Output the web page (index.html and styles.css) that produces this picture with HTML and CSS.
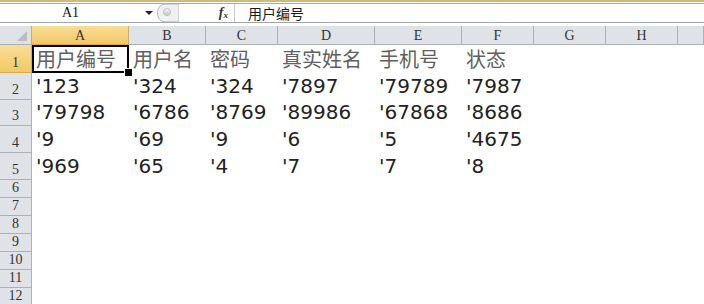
FILE: index.html
```html
<!DOCTYPE html>
<html>
<head>
    <meta charset="utf-8">
    <link rel="stylesheet" href="styles.css">
</head>
<body>
    <div class="top-line"></div>

    <div class="formula-bar">
        <div class="name-box">
            <span class="name">A1</span>
            <span class="arrow"></span>
        </div>
        <div class="splitter">
            <svg width="22" height="18" viewBox="0 0 22 18">
                <defs>
                    <linearGradient id="dotGrad" x1="0" y1="0" x2="0" y2="1">
                        <stop offset="0" stop-color="#f7f8f9"/>
                        <stop offset="1" stop-color="#bfc3c8"/>
                    </linearGradient>
                </defs>
                <path d="M22 0 H9 C3 0 0.5 4 0.5 9 C0.5 14 3 18 9 18 H22 Z" fill="#eef0f2" stroke="#b2b6bc" stroke-width="1"/>
                <circle cx="10" cy="8" r="3.6" fill="url(#dotGrad)" stroke="#b9bcc1" stroke-width="0.8"/>
            </svg>
        </div>
        <div class="fx-area">
            <span class="fx">f<sub>x</sub></span>
        </div>
        <div class="formula">用户编号</div>
    </div>

    <div class="sheet">
        <div class="row head-row">
            <div class="corner"><span class="corner-tri"></span></div>
            <div class="ch selected">A</div>
            <div class="ch">B</div>
            <div class="ch">C</div>
            <div class="ch">D</div>
            <div class="ch">E</div>
            <div class="ch">F</div>
            <div class="ch">G</div>
            <div class="ch">H</div>
            <div class="ch"></div>
        </div>

        <div class="row h28">
            <div class="rh selected">1</div>
            <div class="c title active">用户编号</div>
            <div class="c title">用户名</div>
            <div class="c title">密码</div>
            <div class="c title">真实姓名</div>
            <div class="c title">手机号</div>
            <div class="c title">状态</div>
        </div>

        <div class="row h27">
            <div class="rh">2</div>
            <div class="c">'123</div>
            <div class="c">'324</div>
            <div class="c">'324</div>
            <div class="c">'7897</div>
            <div class="c">'79789</div>
            <div class="c">'7987</div>
        </div>

        <div class="row h26">
            <div class="rh">3</div>
            <div class="c">'79798</div>
            <div class="c">'6786</div>
            <div class="c">'8769</div>
            <div class="c">'89986</div>
            <div class="c">'67868</div>
            <div class="c">'8686</div>
        </div>

        <div class="row h27">
            <div class="rh">4</div>
            <div class="c">'9</div>
            <div class="c">'69</div>
            <div class="c">'9</div>
            <div class="c">'6</div>
            <div class="c">'5</div>
            <div class="c">'4675</div>
        </div>

        <div class="row h27">
            <div class="rh">5</div>
            <div class="c">'969</div>
            <div class="c">'65</div>
            <div class="c">'4</div>
            <div class="c">'7</div>
            <div class="c">'7</div>
            <div class="c">'8</div>
        </div>

        <div class="row h18"><div class="rh">6</div></div>
        <div class="row h18"><div class="rh">7</div></div>
        <div class="row h18"><div class="rh">8</div></div>
        <div class="row h18"><div class="rh">9</div></div>
        <div class="row h18"><div class="rh">10</div></div>
        <div class="row h18"><div class="rh">11</div></div>
        <div class="row h18"><div class="rh">12</div></div>
    </div>
</body>
</html>
```

FILE: styles.css
```css
* {
    box-sizing: border-box;
    margin: 0;
    padding: 0;
}

body {
    width: 704px;
    height: 304px;
    overflow: hidden;
    background: #fff;
    font-family: "Liberation Serif", serif;
    color: #333;
}

.top-line {
    height: 2px;
    background: #cdbb7e;
    margin-bottom: 1px;
}

/* formula bar */

.formula-bar {
    display: flex;
    height: 20px;
    border-top: 1px solid #a7abb0;
    border-bottom: 1px solid #a0a4a9;
    margin-bottom: 3px;
}

.name-box {
    width: 157px;
    display: flex;
    align-items: center;
}

.name {
    font-size: 14px;
    margin-left: 62px;
    color: #111;
}

.arrow {
    margin-left: 66px;
    width: 0;
    height: 0;
    border-left: 4px solid transparent;
    border-right: 4px solid transparent;
    border-top: 4px solid #222;
}

.splitter {
    width: 22px;
    display: flex;
    align-items: center;
}

.splitter svg {
    display: block;
}

.fx-area {
    width: 56px;
    display: flex;
    align-items: center;
    justify-content: flex-end;
    padding-right: 6px;
    border-right: 1px solid #c4c7cc;
}

.fx {
    font-style: italic;
    font-weight: bold;
    font-size: 14px;
    color: #333;
}

.fx sub {
    font-size: 9px;
    vertical-align: -1px;
}

.formula {
    flex: 1;
    display: flex;
    align-items: center;
    padding-left: 13px;
    font-family: "Noto Sans CJK SC", sans-serif;
    font-size: 14px;
    color: #1a1a1a;
}

/* sheet */

.row {
    display: grid;
    grid-template-columns: 32px 97px 77px 72px 97px 87px 72px 72px 72px 1fr;
}

.head-row { height: 19px; }
.h28 { height: 28px; }
.h27 { height: 27px; }
.h26 { height: 26px; }
.h18 { height: 18px; }

.corner {
    background: #dfe3e8;
    border-right: 1px solid #abb0b7;
    border-bottom: 1px solid #abb0b7;
    position: relative;
}

.corner-tri {
    position: absolute;
    right: 4px;
    bottom: 3px;
    width: 0;
    height: 0;
    border-left: 10px solid transparent;
    border-bottom: 10px solid #b9bdc3;
}

.ch {
    background: #dfe3e8;
    border-right: 1px solid #abb0b7;
    border-bottom: 1px solid #abb0b7;
    display: flex;
    align-items: center;
    justify-content: center;
    font-size: 14px;
    padding-top: 2px;
}

.ch.selected {
    background: linear-gradient(#f9de96, #f2c866);
    border-bottom-color: #e4a93c;
    border-right-color: #c9ab6b;
}

.rh {
    background: #dfe3e8;
    border-right: 1px solid #abb0b7;
    border-bottom: 1px solid #abb0b7;
    display: flex;
    align-items: flex-end;
    justify-content: center;
    font-size: 14px;
    line-height: 13px;
    padding-bottom: 3px;
}

.rh.selected {
    background: linear-gradient(#f9de96, #f2c866);
    border-right-color: #e4a93c;
    border-bottom-color: #e4a93c;
}

.c {
    display: flex;
    align-items: flex-end;
    padding: 0 0 2px 4px;
    font-family: "DejaVu Sans", sans-serif;
    font-size: 20px;
    line-height: 23px;
    color: #222;
    white-space: nowrap;
}

.c.title {
    font-family: "Noto Sans CJK SC", sans-serif;
    color: #606060;
    padding-bottom: 3px;
}

.c.active {
    position: relative;
    outline: 2px solid #000;
    outline-offset: -2px;
}

.c.active::after {
    content: "";
    position: absolute;
    right: -4px;
    bottom: -4px;
    width: 7px;
    height: 7px;
    background: #000;
    border: 1px solid #fff;
    z-index: 2;
}
```
